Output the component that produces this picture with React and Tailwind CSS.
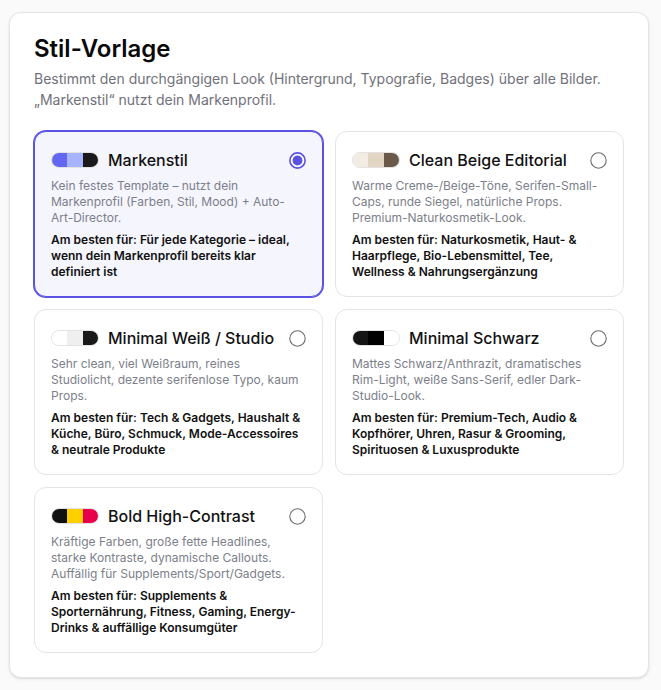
const styles = [
  {
    name: "Markenstil",
    colors: ["bg-[#6366f1]", "bg-[#a5b4fc]", "bg-[#1a1a1a]"],
    desc: "Kein festes Template – nutzt dein Markenprofil (Farben, Stil, Mood) + Auto-Art-Director.",
    best: "Am besten für: Für jede Kategorie – ideal, wenn dein Markenprofil bereits klar definiert ist",
    selected: true,
  },
  {
    name: "Clean Beige Editorial",
    colors: ["bg-[#f3ece2]", "bg-[#e2d5c3]", "bg-[#6b5a4a]"],
    desc: "Warme Creme-/Beige-Töne, Serifen-Small-Caps, runde Siegel, natürliche Props. Premium-Naturkosmetik-Look.",
    best: "Am besten für: Naturkosmetik, Haut- & Haarpflege, Bio-Lebensmittel, Tee, Wellness & Nahrungsergänzung",
  },
  {
    name: "Minimal Weiß / Studio",
    colors: ["bg-white", "bg-[#efefef]", "bg-[#1a1a1a]"],
    desc: "Sehr clean, viel Weißraum, reines Studiolicht, dezente serifenlose Typo, kaum Props.",
    best: "Am besten für: Tech & Gadgets, Haushalt & Küche, Büro, Schmuck, Mode-Accessoires & neutrale Produkte",
  },
  {
    name: "Minimal Schwarz",
    colors: ["bg-[#141414]", "bg-black", "bg-white"],
    desc: "Mattes Schwarz/Anthrazit, dramatisches Rim-Light, weiße Sans-Serif, edler Dark-Studio-Look.",
    best: "Am besten für: Premium-Tech, Audio & Kopfhörer, Uhren, Rasur & Grooming, Spirituosen & Luxusprodukte",
  },
  {
    name: "Bold High-Contrast",
    colors: ["bg-[#111111]", "bg-[#ffd000]", "bg-[#e8004c]"],
    desc: "Kräftige Farben, große fette Headlines, starke Kontraste, dynamische Callouts. Auffällig für Supplements/Sport/Gadgets.",
    best: "Am besten für: Supplements & Sporternährung, Fitness, Gaming, Energy-Drinks & auffällige Konsumgüter",
  },
];

const Radio = ({ checked }) =>
  checked ? (
    <svg width="17" height="17" viewBox="0 0 17 17" className="shrink-0">
      <circle cx="8.5" cy="8.5" r="7.6" fill="white" stroke="#5b52e3" strokeWidth="1.6" />
      <circle cx="8.5" cy="8.5" r="4.9" fill="#5b52e3" />
    </svg>
  ) : (
    <svg width="17" height="17" viewBox="0 0 17 17" className="shrink-0">
      <circle cx="8.5" cy="8.5" r="7.7" fill="white" stroke="#6b6b6b" strokeWidth="1.1" />
    </svg>
  );

const StyleCard = ({ item }) => (
  <div
    className={
      item.selected
        ? "rounded-xl border border-[#5b52e3] ring-1 ring-[#5b52e3] bg-[#f5f5fd] p-4"
        : "rounded-xl border border-[#e4e4e7] bg-white p-4"
    }
  >
    <div className="flex items-center h-6">
      <div className="flex w-12 h-4 rounded-full overflow-hidden border border-[#e2e2e2] shrink-0">
        {item.colors.map((c, i) => (
          <div key={i} className={"flex-1 " + c} />
        ))}
      </div>
      <div className="ml-[9px] text-base font-medium text-[#111] flex-1">{item.name}</div>
      <Radio checked={item.selected} />
    </div>
    <p className="mt-1.5 text-xs leading-4 text-[#7c808a]">{item.desc}</p>
    <p className="mt-1.5 text-xs leading-4 font-semibold text-[#111]">{item.best}</p>
  </div>
);

const App = () => {
  return (
    <div
      className="min-h-screen bg-[#fafafa] pl-[9px] pt-3"
      style={{ fontFamily: "Inter, 'Noto Sans', sans-serif" }}
    >
      <div className="w-[640px] bg-white border border-[#e4e4e7] rounded-xl px-6 pt-[21px] pb-6 shadow-sm">
        <h2 className="text-2xl leading-[30px] font-semibold text-[#0a0a0a]">Stil-Vorlage</h2>
        <p className="mt-1 text-sm leading-[21px] text-[#71717a]">
          Bestimmt den durchgängigen Look (Hintergrund, Typografie, Badges) über alle Bilder.
          <br />
          „Markenstil“ nutzt dein Markenprofil.
        </p>
        <div className="mt-[21px] grid grid-cols-2 gap-3">
          {styles.map((s) => (
            <StyleCard key={s.name} item={s} />
          ))}
        </div>
      </div>
    </div>
  );
};

export default App;
